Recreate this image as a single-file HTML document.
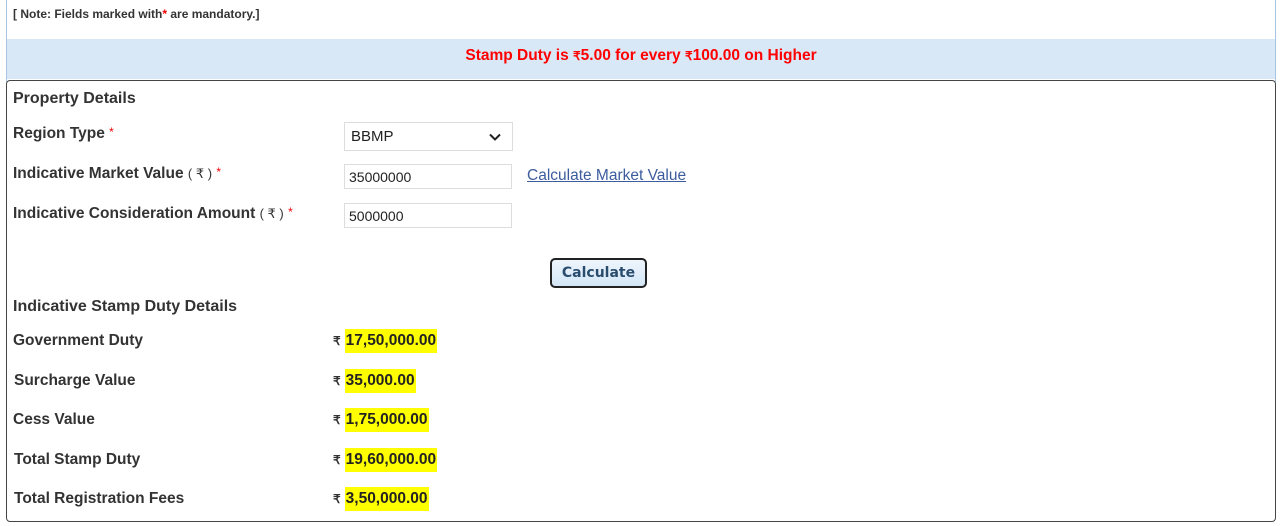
<!DOCTYPE html>
<html><head><style>
body{margin:0;width:1282px;height:526px;background:#fff;font-family:"Liberation Sans",Arial,sans-serif;color:#333;position:relative;overflow:hidden}
.outer{position:absolute;left:6px;top:-2px;width:1268px;height:84px;border-left:1px solid #a9c4e0;border-right:1px solid #a9c4e0}
.note{position:absolute;left:13px;top:7px;font-size:12px;font-weight:bold;color:#333}
.req{color:#e00}
.band{position:absolute;left:7px;top:39px;width:1268px;height:40px;background:#d9e8f7;text-align:center;line-height:34px;color:#f00;font-weight:bold;font-size:15.5px}
.band i{font-style:normal;font-size:12px}
.box{position:absolute;left:6px;top:80px;width:1268px;height:440px;border:1px solid #444;border-radius:4px}
.t{position:absolute;font-weight:bold;font-size:15.5px;color:#333}
.h{font-size:16px}
.inp{position:absolute;border:1px solid #ddd;background:#fff;font-size:14px;color:#222;box-sizing:border-box}
.v{position:absolute;font-weight:bold;font-size:15.5px}
.v span{background:#ff0;padding:3px 1px 4px;color:#222}
.v i{font-style:normal;font-size:12px;margin-right:4px}
</style></head><body>
<div class="outer"></div>
<div class="note">[ Note: Fields marked with<span class="req">*</span> are mandatory.]</div>
<div class="band">Stamp Duty is <i>₹</i>5.00 for every <i>₹</i>100.00 on Higher</div>
<div class="box"></div>
<div class="t h" style="left:13px;top:90px">Property Details</div>
<div class="t" style="left:13px;top:125px">Region Type <span class="req" style="font-size:12px;font-weight:normal;vertical-align:top">*</span></div>
<div class="inp" style="left:344px;top:122px;width:169px;height:29px;padding:5px 0 0 6px;font-size:15px">BBMP
<svg style="position:absolute;right:11px;top:10px" width="12" height="8" viewBox="0 0 12 8"><path d="M1 1.5L6 6.5L11 1.5" stroke="#222" stroke-width="2" fill="none"/></svg></div>
<div class="t" style="left:13px;top:165px">Indicative Market Value <span style="font-weight:normal;font-size:13px">( ₹ )</span> <span class="req" style="font-size:12px;font-weight:normal;vertical-align:top">*</span></div>
<div class="inp" style="left:344px;top:164px;width:168px;height:25px;padding:4px 0 0 4px">35000000</div>
<div style="position:absolute;left:527px;top:167px;font-size:15.5px;color:#3d5c9e;text-decoration:underline">Calculate Market Value</div>
<div class="t" style="left:13px;top:205px">Indicative Consideration Amount <span style="font-weight:normal;font-size:13px">( ₹ )</span> <span class="req" style="font-size:12px;font-weight:normal;vertical-align:top">*</span></div>
<div class="inp" style="left:344px;top:203px;width:168px;height:25px;padding:4px 0 0 4px">5000000</div>
<div style="position:absolute;left:550px;top:258px;width:97px;height:30px;box-sizing:border-box;border:2px solid #222;border-radius:5px;background:linear-gradient(#eef5fc,#d4e6f6);text-align:center;line-height:27px;font-weight:bold;font-size:14px;color:#2a4d6e;font-family:'DejaVu Sans',sans-serif">Calculate</div>
<div class="t h" style="left:13px;top:298px">Indicative Stamp Duty Details</div>
<div class="t" style="left:13px;top:332px">Government Duty</div>
<div class="v" style="left:333px;top:332px"><i>₹</i><span>17,50,000.00</span></div>
<div class="t" style="left:14px;top:372px">Surcharge Value</div>
<div class="v" style="left:333px;top:372px"><i>₹</i><span>35,000.00</span></div>
<div class="t" style="left:13px;top:411px">Cess Value</div>
<div class="v" style="left:333px;top:411px"><i>₹</i><span>1,75,000.00</span></div>
<div class="t" style="left:14px;top:451px">Total Stamp Duty</div>
<div class="v" style="left:333px;top:451px"><i>₹</i><span>19,60,000.00</span></div>
<div class="t" style="left:14px;top:490px">Total Registration Fees</div>
<div class="v" style="left:333px;top:490px"><i>₹</i><span>3,50,000.00</span></div>
</body></html>
